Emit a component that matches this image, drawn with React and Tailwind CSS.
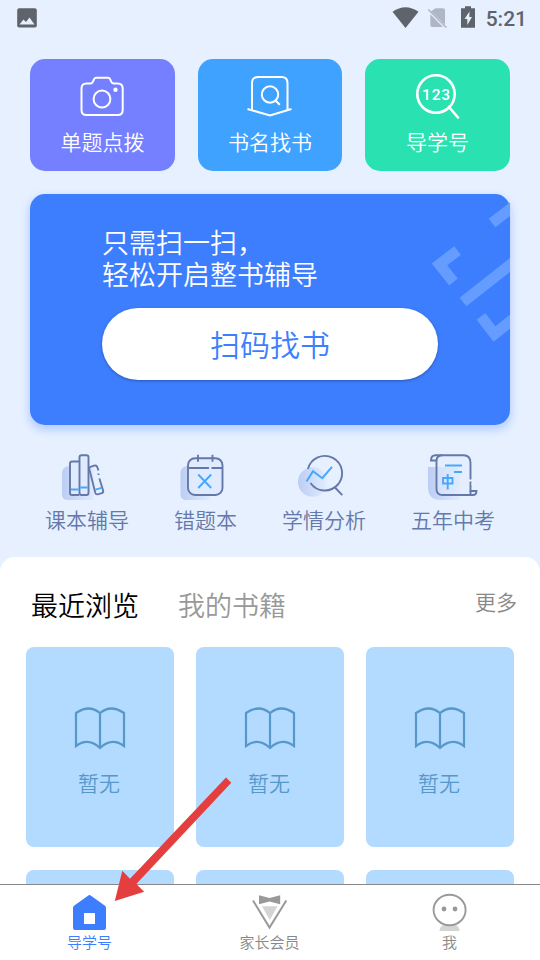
const quickActions = [
  { label: "单题点拨", color: "bg-[#7480ff]", width: "w-[145px]", Icon: CameraIcon },
  { label: "书名找书", color: "bg-[#40a2ff]", width: "w-[144px]", Icon: BookSearchIcon },
  { label: "导学号", color: "bg-[#2ae2b1]", width: "w-[145px]", Icon: NumberSearchIcon },
];

const tools = [
  { label: "课本辅导", Icon: BooksIcon },
  { label: "错题本", Icon: CalendarIcon },
  { label: "学情分析", Icon: AnalysisIcon },
  { label: "五年中考", Icon: ExamIcon },
];

const navItems = [
  { label: "导学号", active: true, Icon: HomeIcon },
  { label: "家长会员", Icon: MemberIcon },
  { label: "我", Icon: MeIcon },
];

function CameraIcon() {
  return (
    <svg className="h-[50px] w-[60px]" viewBox="72.500 71 60 50" fill="none" stroke="#fff" strokeWidth="2">
      <path d="M86 83.500h4q2 0 3-3l.6-1.400q.6-1.300 2-1.300h12q1.400 0 2 1.300l.6 1.400q1 3 3 3h4q5 0 5 5V110q0 5-5 5H86q-5 0-5-5V88.500q0-5 5-5Z" />
      <circle cx="101.500" cy="99" r="8.400" />
      <circle cx="115" cy="89.700" r="2.200" fill="#fff" stroke="none" />
    </svg>
  );
}

function BookSearchIcon() {
  return (
    <svg className="h-[50px] w-[60px]" viewBox="240 71 60 50" fill="none" stroke="#fff" strokeWidth="2">
      <path d="M252 110V83q0-6 6-6h23.500q6 0 6 6v27M247.500 109l22.500 6.500 21.500-6.500" />
      <circle cx="270" cy="94.500" r="8.200" />
      <path d="m275 100 4.800 4.800" />
    </svg>
  );
}

function NumberSearchIcon() {
  return (
    <svg className="h-[50px] w-[60px]" viewBox="408 71 60 50" fill="none" stroke="#fff" strokeWidth="2.600">
      <circle cx="436" cy="94" r="18.700" />
      <path d="m449 107 9 10.500" strokeLinecap="round" />
      {/* digits inside the lens */}
      <text
        x="436.500"
        y="99.700"
        textAnchor="middle"
        fill="#fff"
        stroke="none"
        className="font-[Roboto,sans-serif] text-[15.500px] font-medium tracking-[0.8px]"
      >
        123
      </text>
    </svg>
  );
}

function BooksIcon() {
  return (
    <svg className="h-12 w-[52px]" viewBox="61 453 52 48" fill="none" stroke="#6478aa" strokeWidth="1.900">
      <defs>
        <linearGradient id="booksShade">
          <stop stopColor="#bccdf4" />
          <stop offset="1" stopColor="#e0ebff" />
        </linearGradient>
      </defs>
      <path d="M70 466h24v34H68q-6 0-6-6v-20q0-8 8-8Z" fill="url(#booksShade)" stroke="none" />
      <path d="M79 461.500h-7q-2 0-2 2V493q0 2 2 2h7" fill="#e1ebff" />
      <rect x="79.500" y="455.200" width="9" height="39.800" rx="2" fill="#e1ebff" />
      <path d="M98.500 470.500 97 466.500q-1-1.500-3-.8l-3.500 1.200q-1.700.6-1.200 2.200l6 23.700q.6 2 2.500 1.500l4-1.200q1.900-.6 1.300-2.600l-3.700-12M98.500 473.500v1.500" />
      <path d="M71 489.500h7.500M80.300 487.500h7.400M95.500 489.700l6-1.800" stroke="#45a8ff" />
    </svg>
  );
}

function CalendarIcon() {
  return (
    <svg className="h-12 w-[52px]" viewBox="180 453 52 48" fill="none" stroke="#6478aa" strokeWidth="1.900">
      <defs>
        <linearGradient id="calendarShade">
          <stop stopColor="#bccdf4" />
          <stop offset="1" stopColor="#e0ebff" />
        </linearGradient>
      </defs>
      <path d="M188 466h22v34h-23.500q-6 0-6-6v-20q0-8 7.500-8Z" fill="url(#calendarShade)" stroke="none" />
      <rect x="188" y="458.200" width="34.500" height="36.800" rx="7" fill="#e1ebff" />
      <path d="M189 468h20M211.500 468h10.500" />
      <path d="M198 454.700v7M212.500 454.700v7" />
      <path d="m198.200 474.500 13 13.500M211.200 474.500l-13 13.500" stroke="#45a8ff" />
    </svg>
  );
}

function AnalysisIcon() {
  return (
    <svg className="h-12 w-[52px]" viewBox="298 453 52 48" fill="none" stroke="#6478aa" strokeWidth="1.900">
      <defs>
        <linearGradient id="analysisShade">
          <stop stopColor="#bccdf4" />
          <stop offset="1" stopColor="#e4eeff" />
        </linearGradient>
      </defs>
      <circle cx="312.800" cy="482" r="14.800" fill="url(#analysisShade)" stroke="none" />
      <path d="M308 469a17.300 17.300 0 1 1 2.500 14M334.500 487l7.800 8.200" />
      <path d="m306.500 481.500 6.500-10.300 9.300 7 9.700-11.400" stroke="#45a8ff" strokeWidth="2" />
    </svg>
  );
}

function ExamIcon() {
  return (
    <svg className="h-12 w-[52px]" viewBox="427 453 52 48" fill="none" stroke="#6478aa" strokeWidth="1.900">
      <defs>
        <linearGradient id="examShade">
          <stop stopColor="#bccdf4" />
          <stop offset="1" stopColor="#e0ebff" />
        </linearGradient>
      </defs>
      <path d="M428 467h32v33h-19q-13 0-13-13Z" fill="url(#examShade)" stroke="none" />
      <path d="M436.500 461V489q0 6 6 6H473q3.500 0 3.500-4h-6V463q0-7.700-7-7.700h-21q-6 0-6 5.700Z" fill="#e1ebff" fillOpacity=".5" />
      <path d="M442.500 455.300h-7q-4.500 0-4.500 5.200h5.500M470.500 491v3.500" />
      <path d="M445 465.500h17M454 472h8M443 478h9.500v5.500H443ZM447.700 474v15.500" stroke="#45a8ff" />
      <path d="M469 480.500h4M471.500 484h2" stroke="#f2f6ff" />
    </svg>
  );
}

function HomeIcon() {
  return (
    <svg className="h-10 w-10" viewBox="70 893 40 40">
      <path d="M88 895.700q1.500-1.200 3 0l14 10q1 .8 1 2V928q0 2-2 2H75q-2 0-2-2v-20.300q0-1.200 1-2Z" fill="#3d7eff" />
      <rect x="84" y="913" width="11" height="11" fill="#fff" />
    </svg>
  );
}

function MemberIcon() {
  return (
    <svg className="h-10 w-10" viewBox="250 893 40 40">
      <path d="M262 906.300h15.500L269.800 920Z" fill="#d4d4d4" />
      <path d="M259 895.300 269.500 898l10.700-2.700v9L269.500 901.500l-10.500 2.800Z" fill="#999" />
      <path d="m253 900.500 16.500 27 16.800-27" fill="none" stroke="#999" strokeWidth="2" />
    </svg>
  );
}

function MeIcon() {
  return (
    <svg className="h-10 w-10" viewBox="430 893 40 40">
      <path d="M443 925h13q3.500 2 3.500 6h-20q0-4 3.500-6Z" fill="#d4d4d4" />
      <ellipse cx="449.600" cy="910" rx="16" ry="15.200" fill="#fff" stroke="#999" strokeWidth="1.900" />
      <circle cx="444" cy="909" r="2.400" fill="#999" />
      <circle cx="455" cy="909" r="2.400" fill="#999" />
    </svg>
  );
}

function StatusBar() {
  return (
    <div className="flex h-9 items-center justify-between pr-[13px] pl-[17px]">
      <svg className="h-5 w-5" viewBox="17 8 20 20">
        <rect x="17.200" y="8.200" width="19.600" height="19.400" rx="2" fill="#5f636b" />
        <path d="m19.500 24.500 4-5 2.500 2.500 3.500-4.500 5 7Z" fill="#e6f0ff" />
      </svg>
      <div className="flex items-center">
        <svg className="h-6 w-[86px]" viewBox="390 6 86 24" fill="#5f636b">
          <path d="M392.500 11.800Q405.500 2.500 418.500 11.800L405.500 28Z" />
          <path d="M435.500 8.200h7.500q2 0 2 2v14.500L431 11.200Zm-5.200 6L443 27h-10.800q-1.900 0-1.900-2Z" fill="#afb7c4" />
          <path d="m428.300 9.500 18 18" stroke="#afb7c4" strokeWidth="1.600" />
          <path d="M465 6.200h6v2h4v19.600h-14V8.200h4Z" />
          <path d="M469.500 11.500 464.500 19h2.800v6l4.700-8h-2.700Z" fill="#e6f0ff" />
        </svg>
        <span className="ml-[10px] pt-[2px] font-[Roboto,sans-serif] text-[21px] leading-6 font-medium text-[#5f636b]">
          5:21
        </span>
      </div>
    </div>
  );
}

function ScanBanner() {
  return (
    <div className="relative mx-[30px] mt-[23px] h-[231px] rounded-[15px] bg-[#3d7eff] px-[72px] pt-[32px] shadow-[0_4px_9px_1px_rgba(61,126,255,0.3)]">
      {/* scan frame decoration */}
      <svg className="absolute top-0 right-0 h-[160px] w-[90px]" viewBox="420 194 90 160" fill="none" stroke="#649dff" strokeWidth="11">
        <path d="m492 223 22-17 14 18M457.500 250.500l-18 14 14 17.500M463 302l52-41M481 316.500l13.500 17.500 20-16" />
      </svg>
      <p className="relative text-[27px] leading-[32px] text-white">
        只需扫一扫，
        <br />
        轻松开启整书辅导
      </p>
      <button className="relative mt-[18px] flex h-[72px] w-[336px] items-center justify-center rounded-full bg-white pb-[3px] text-[30px] leading-[40px] text-[#3d7eff] shadow-[0_1px_3px_rgba(0,0,0,0.3)]">
        扫码找书
      </button>
    </div>
  );
}

function BookCard() {
  return (
    <div className="flex h-[200px] w-[148px] flex-col items-center rounded-[8px] bg-[#b3daff] pt-[57px] text-[#5798ca]">
      <svg className="h-[48px] w-[54px]" viewBox="73 704 54 48" fill="none" stroke="currentColor" strokeWidth="2.200">
        <path d="M100 713q-11-9-24 0v33q12-9 24 2 12-11 24-2v-33q-13-9-24 0Z" />
        <path d="M100 713v34" />
      </svg>
      <span className="mt-[15px] mr-[2px] text-[21px] leading-[30px]">暂无</span>
    </div>
  );
}

function BottomNav() {
  return (
    <div className="grid h-[76px] shrink-0 grid-cols-3 border-t border-[#888] bg-white">
      {navItems.map(({ label, active, Icon }) => (
        <div key={label} className="flex flex-col items-center pt-2">
          <Icon />
          <span
            className={`mr-px text-[15px] leading-[18px] ${active ? "text-[#3d7eff]" : "text-[#888]"}`}
          >
            {label}
          </span>
        </div>
      ))}
    </div>
  );
}

function App() {
  return (
    <div className="relative flex h-[960px] w-[540px] flex-col overflow-hidden bg-[#e6f0ff] font-['Noto_Sans_CJK_SC',sans-serif] font-[350]">
      <StatusBar />
      {/* quick actions */}
      <div className="mt-[23px] flex justify-between px-[30px]">
        {quickActions.map(({ label, color, width, Icon }) => (
          <div
            key={label}
            className={`flex h-[112px] flex-col items-center rounded-[15px] pt-3 text-white ${color} ${width}`}
          >
            <Icon />
            <span className="mt-[5px] text-[21px] leading-[30px]">{label}</span>
          </div>
        ))}
      </div>
      <ScanBanner />
      {/* study tools */}
      <div className="mt-[28px] flex h-[104px] gap-[45px] pl-[45px]">
        {tools.map(({ label, Icon }) => (
          <div key={label} className="flex flex-col items-center">
            <Icon />
            <span className="mt-[3px] text-[21px] leading-[30px] text-[#6478aa]">
              {label}
            </span>
          </div>
        ))}
      </div>
      {/* recently viewed */}
      <div className="min-h-0 flex-1 overflow-hidden rounded-t-[15px] bg-white">
        <div className="flex h-[90px] items-start pt-[28px] pr-[23px] pl-[31px]">
          <span className="text-[27px] leading-[40px] text-black">最近浏览</span>
          <span className="ml-[39px] text-[27px] leading-[40px] text-[#999]">
            我的书籍
          </span>
          <span className="ml-auto text-[21px] leading-[32px] text-[#888]">更多</span>
        </div>
        <div className="grid grid-cols-[148px_148px_148px] gap-x-[22px] gap-y-[23px] pl-[26px]">
          {[1, 2, 3].map((id) => (
            <BookCard key={id} />
          ))}
          {/* next row peeking above the nav */}
          {[4, 5, 6].map((id) => (
            <div key={id} className="h-[14px] rounded-t-[8px] bg-[#b3daff]" />
          ))}
        </div>
      </div>
      <BottomNav />
      {/* pointer to the active tab */}
      <svg className="absolute top-[770px] left-[105px] h-[140px] w-[135px]" viewBox="105 770 135 140" fill="#e43e3e">
        <path d="m226 777.500 5.300 5.200L136.300 884l7.900 7.700-29.400 9.200 7.500-30.200 7.700 8Z" />
      </svg>
    </div>
  );
}

export default App;
